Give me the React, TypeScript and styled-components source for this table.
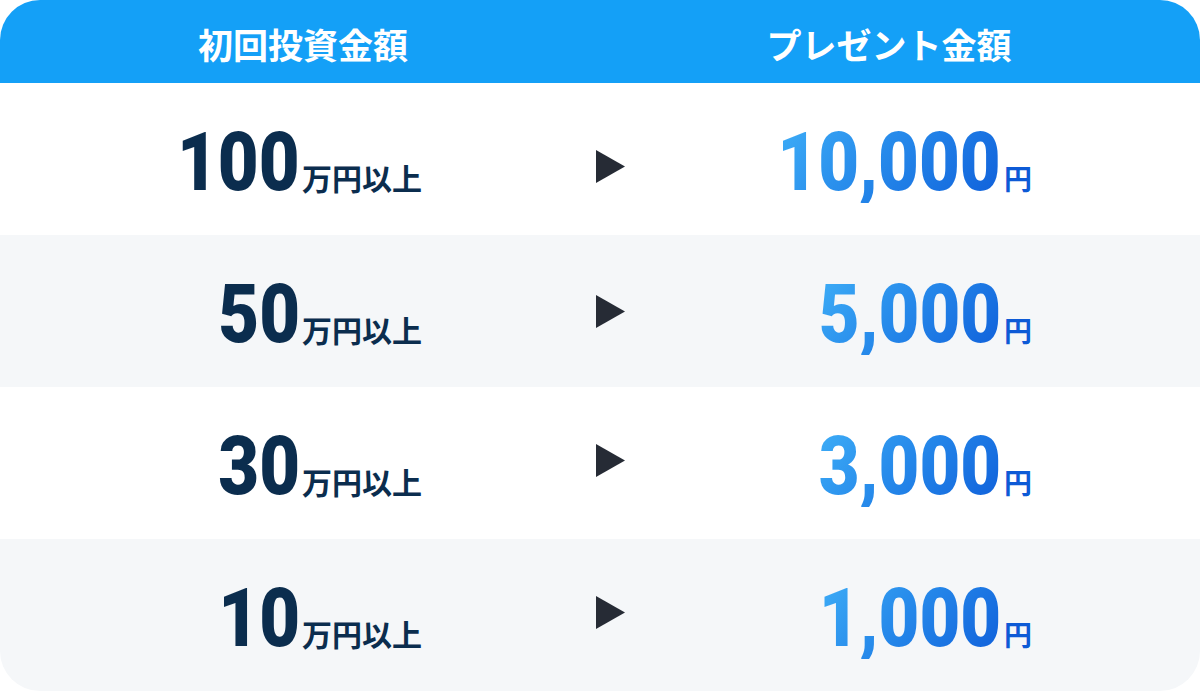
import React from "react";
import styled, { css, createGlobalStyle } from "styled-components";

const Global = createGlobalStyle`
  html, body { margin: 0; padding: 0; background: #ffffff; }
  body { font-family: "Noto Sans CJK JP", "Noto Sans", sans-serif; }
`;

const Card = styled.div`
  width: 1200px;
  height: 691px;
  border-radius: 40px;
  overflow: hidden;
  background: #ffffff;
  display: flex;
  flex-direction: column;
`;

const Header = styled.div`
  height: 83px;
  background: #14a0f7;
  display: grid;
  grid-template-columns: 606px 566px;
  align-items: center;
  padding-top: 3px;
  box-sizing: border-box;
`;

const HeadCell = styled.div`
  color: #ffffff;
  font-family: "Noto Sans CJK JP", sans-serif;
  font-weight: 700;
  font-size: 35px;
  line-height: 1;
  text-align: center;
`;

const Row = styled.div<{ $alt: boolean }>`
  height: 152px;
  background: ${(p) => (p.$alt ? "#f5f7f9" : "#ffffff")};
  display: grid;
  grid-template-columns: 422px 174px 29px 407px;
  align-items: center;
`;

const Amount = styled.div`
  text-align: right;
  line-height: 1;
  white-space: nowrap;
  padding-top: 6px;
`;

const Num = styled.span<{ $grad: boolean }>`
  display: inline-block;
  font-family: "Roboto", sans-serif;
  font-weight: 900;
  font-size: 82px;
  line-height: 1;
  transform: scaleX(0.86);
  transform-origin: right bottom;
  color: #0b2d4e;
  ${(p) =>
    p.$grad &&
    css`
      background: linear-gradient(135deg, #3eaef7 0%, #2486e9 50%, #0f5fda 100%);
      -webkit-background-clip: text;
      background-clip: text;
      color: transparent;
    `}
`;

const Unit = styled.span<{ $size: number; $gap: number; $color: string }>`
  font-family: "Noto Sans CJK JP", sans-serif;
  font-weight: 700;
  font-size: ${(p) => p.$size}px;
  margin-left: ${(p) => p.$gap}px;
  color: ${(p) => p.$color};
`;

const Arrow = styled.svg<{ $shift: number }>`
  display: block;
  width: 29px;
  height: 33px;
  margin-top: ${(p) => p.$shift * 2}px;
`;

const rows = [
  { left: "100", right: "10,000", shift: 7 },
  { left: "50", right: "5,000", shift: 0 },
  { left: "30", right: "3,000", shift: -3 },
  { left: "10", right: "1,000", shift: -3 },
];

export default function App() {
  return (
    <>
      <Global />
      <Card>
        <Header>
          <HeadCell>初回投資金額</HeadCell>
          <HeadCell>プレゼント金額</HeadCell>
        </Header>
        {rows.map((r, i) => (
          <Row key={r.left} $alt={i % 2 === 1}>
            <Amount>
              <Num $grad={false}>{r.left}</Num>
              <Unit $size={30} $gap={2} $color="#0b2d4e">
                万円以上
              </Unit>
            </Amount>
            <div />
            <Arrow $shift={r.shift} viewBox="0 0 29 33">
              <polygon points="0,0 29,16.5 0,33" fill="#262b35" />
            </Arrow>
            <Amount>
              <Num $grad>{r.right}</Num>
              <Unit $size={28} $gap={3} $color="#0d5ad6">
                円
              </Unit>
            </Amount>
          </Row>
        ))}
      </Card>
    </>
  );
}
